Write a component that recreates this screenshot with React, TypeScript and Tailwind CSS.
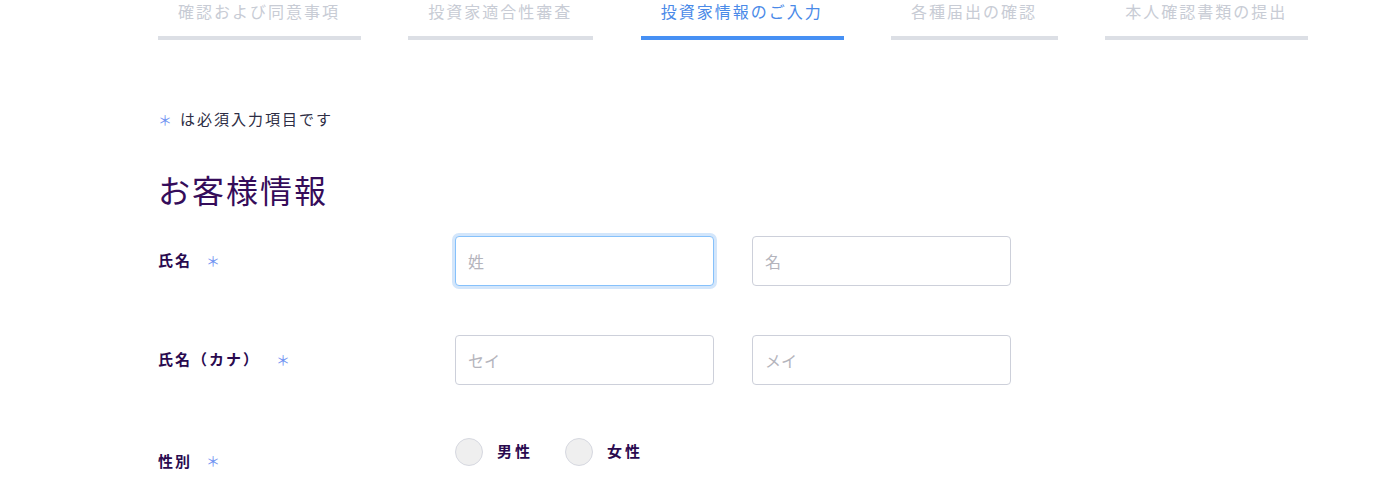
import React from "react";

const steps = [
  { label: "確認および同意事項", active: false },
  { label: "投資家適合性審査", active: false },
  { label: "投資家情報のご入力", active: true },
  { label: "各種届出の確認", active: false },
  { label: "本人確認書類の提出", active: false },
];

const font = "font-['Noto_Sans_CJK_JP','Noto_Sans',sans-serif]";

function Req() {
  return <span className="text-[#6f93f2] font-normal text-[14px] tracking-normal">＊</span>;
}

function Field({ placeholder, focused }: { placeholder: string; focused?: boolean }) {
  return (
    <input
      placeholder={placeholder}
      className={
        "w-[259px] h-[50px] rounded-[4px] border bg-white px-[12px] text-[16px] text-[#333] placeholder:text-[#b4b4bc] outline-none " +
        (focused
          ? "border-[#86c1fb] shadow-[0_0_0_3px_#d3e6fb]"
          : "border-[#cdd0da]")
      }
    />
  );
}

function Radio({ label }: { label: string }) {
  return (
    <label className="flex items-center gap-[14px]">
      <span className="w-[28px] h-[28px] rounded-full bg-[#efefef] border border-[#d6d8e0]" />
      <span className="text-[15px] font-bold tracking-[3px] text-[#2a0a4f]">{label}</span>
    </label>
  );
}

export default function App() {
  return (
    <div className={`w-[1393px] h-[480px] bg-white overflow-hidden ${font}`}>
      {/* progress steps */}
      <div className="flex gap-[47.3px] pl-[158px] -mt-[4px]">
        {steps.map((s) => (
          <div key={s.label} className="flex flex-col">
            <div
              className={
                "pl-[20px] pr-[21px] text-[16px] leading-[30px] tracking-[2px] whitespace-nowrap " +
                (s.active ? "text-[#4a8ae8]" : "text-[#c8ccd5]")
              }
            >
              {s.label}
            </div>
            <div
              className={
                "mt-[10px] h-[4px] " + (s.active ? "bg-[#4690f4]" : "bg-[#dcdfe5]")
              }
            />
          </div>
        ))}
      </div>

      <div className="pl-[158px] pt-[68px]">
        <p className="text-[15px] text-[#2d2d44] tracking-[2px] flex items-center gap-[8px]">
          <Req />
          <span>は必須入力項目です</span>
        </p>

        <h2 className="mt-[38px] text-[32px] leading-[40px] tracking-[2px] text-[#350c5a]">
          お客様情報
        </h2>

        <div className="mt-[27px] flex flex-col">
          <div className="flex items-center">
            <div className="w-[297px] flex items-center gap-[14px] text-[15px] font-bold tracking-[2px] text-[#2a0a4f]">
              <span>氏名</span>
              <Req />
            </div>
            <div className="flex gap-[38px]">
              <Field placeholder="姓" focused />
              <Field placeholder="名" />
            </div>
          </div>

          <div className="mt-[49px] flex items-center">
            <div className="w-[297px] flex items-center gap-[16px] text-[15px] font-bold tracking-[2px] text-[#2a0a4f]">
              <span>氏名（カナ）</span>
              <Req />
            </div>
            <div className="flex gap-[38px]">
              <Field placeholder="セイ" />
              <Field placeholder="メイ" />
            </div>
          </div>

          <div className="mt-[53px] flex items-start">
            <div className="w-[297px] pt-[12px] flex items-center gap-[14px] text-[15px] font-bold tracking-[2px] text-[#2a0a4f]">
              <span>性別</span>
              <Req />
            </div>
            <div className="flex gap-[32px]">
              <Radio label="男性" />
              <Radio label="女性" />
            </div>
          </div>
        </div>
      </div>
    </div>
  );
}
